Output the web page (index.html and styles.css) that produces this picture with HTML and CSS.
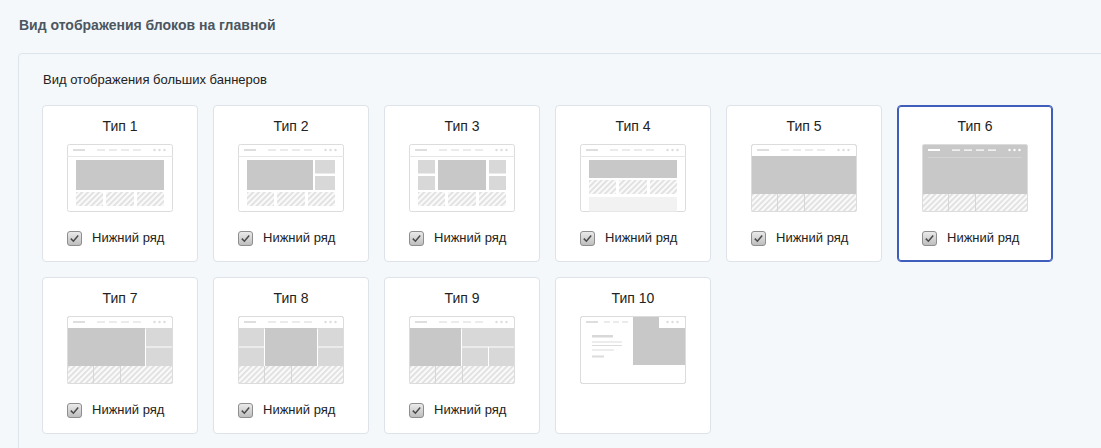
FILE: index.html
```html
<!DOCTYPE html>
<html lang="ru">
<head>
    <meta charset="UTF-8">
    <meta name="viewport" content="width=device-width, initial-scale=1.0">
    <title>Вид отображения блоков</title>
    <link rel="stylesheet" href="styles.css">
</head>
<body>
    <!-- общие элементы для схем -->
    <svg class="defs" width="0" height="0">
        <defs>
            <pattern id="hatch" patternUnits="userSpaceOnUse" width="4" height="4" patternTransform="rotate(45)">
                <rect width="4" height="4" fill="#fafafa"/>
                <rect width="1.7" height="4" fill="#dedede"/>
            </pattern>
            <g id="hdr">
                <rect x="6" y="5" width="12" height="2" fill="#dedede"/>
                <rect x="30" y="5.5" width="8" height="1" fill="#d8d8d8"/>
                <rect x="42" y="5.5" width="8" height="1" fill="#d8d8d8"/>
                <rect x="54" y="5.5" width="8" height="1" fill="#d8d8d8"/>
                <rect x="66" y="5.5" width="8" height="1" fill="#d8d8d8"/>
                <circle cx="87.5" cy="6" r="1.2" fill="#dcdcdc"/>
                <circle cx="92.5" cy="6" r="1.2" fill="#dcdcdc"/>
                <circle cx="97.5" cy="6" r="1.2" fill="#dcdcdc"/>
                <rect x="0" y="12" width="106" height="1" fill="#e6e6e6"/>
            </g>
            <g id="hatch3">
                <rect x="9" y="48" width="27" height="14" fill="url(#hatch)"/>
                <rect x="39" y="48" width="28" height="14" fill="url(#hatch)"/>
                <rect x="70" y="48" width="27" height="14" fill="url(#hatch)"/>
            </g>
            <g id="hatchFull">
                <rect x="0" y="50" width="106" height="18" fill="url(#hatch)"/>
                <rect x="26" y="50" width="1" height="18" fill="#d6d6d6"/>
                <rect x="53" y="50" width="1" height="18" fill="#d6d6d6"/>
            </g>
            <symbol id="check" viewBox="0 0 15 15">
                <linearGradient id="boxFill" x1="0" y1="0" x2="0" y2="1">
                    <stop offset="0" stop-color="#ececec"/>
                    <stop offset="1" stop-color="#bcbcbc"/>
                </linearGradient>
                <rect x="0.5" y="0.5" width="14" height="14" rx="2.5" fill="url(#boxFill)" stroke="#8e8e8e"/>
                <path d="M3.8 7.6 L6.4 10.2 L11.2 4.6" fill="none" stroke="#4a4a4a" stroke-width="1.5"/>
            </symbol>
        </defs>
    </svg>

    <h2 class="section-title">Вид отображения блоков на главной</h2>

    <div class="panel">
        <div class="panel-label">Вид отображения больших баннеров</div>

        <div class="types">
            <div class="type-card">
                <div class="type-name">Тип 1</div>
                <svg class="thumb" viewBox="0 0 106 68">
                    <rect x="0.5" y="0.5" width="105" height="67" rx="2" fill="#fff" stroke="#dcdcdc"/>
                    <use href="#hdr"/>
                    <rect x="9" y="16" width="88" height="30" fill="#c8c8c8"/>
                    <use href="#hatch3"/>
                </svg>
                <label class="bottom-row"><svg class="check"><use href="#check"/></svg>Нижний ряд</label>
            </div>

            <div class="type-card">
                <div class="type-name">Тип 2</div>
                <svg class="thumb" viewBox="0 0 106 68">
                    <rect x="0.5" y="0.5" width="105" height="67" rx="2" fill="#fff" stroke="#dcdcdc"/>
                    <use href="#hdr"/>
                    <rect x="9" y="16" width="66" height="30" fill="#c8c8c8"/>
                    <rect x="77" y="16" width="20" height="13.5" fill="#d8d8d8"/>
                    <rect x="77" y="32" width="20" height="14" fill="#d8d8d8"/>
                    <use href="#hatch3"/>
                </svg>
                <label class="bottom-row"><svg class="check"><use href="#check"/></svg>Нижний ряд</label>
            </div>

            <div class="type-card">
                <div class="type-name">Тип 3</div>
                <svg class="thumb" viewBox="0 0 106 68">
                    <rect x="0.5" y="0.5" width="105" height="67" rx="2" fill="#fff" stroke="#dcdcdc"/>
                    <use href="#hdr"/>
                    <rect x="9" y="16" width="17" height="13.5" fill="#d8d8d8"/>
                    <rect x="9" y="32" width="17" height="14" fill="#d8d8d8"/>
                    <rect x="29" y="16" width="48" height="30" fill="#c8c8c8"/>
                    <rect x="80" y="16" width="17" height="13.5" fill="#d8d8d8"/>
                    <rect x="80" y="32" width="17" height="14" fill="#d8d8d8"/>
                    <use href="#hatch3"/>
                </svg>
                <label class="bottom-row"><svg class="check"><use href="#check"/></svg>Нижний ряд</label>
            </div>

            <div class="type-card">
                <div class="type-name">Тип 4</div>
                <svg class="thumb" viewBox="0 0 106 68">
                    <rect x="0.5" y="0.5" width="105" height="67" rx="2" fill="#fff" stroke="#dcdcdc"/>
                    <use href="#hdr"/>
                    <rect x="9" y="16" width="88" height="18" fill="#c8c8c8"/>
                    <rect x="9" y="36" width="27" height="14" fill="url(#hatch)"/>
                    <rect x="39" y="36" width="28" height="14" fill="url(#hatch)"/>
                    <rect x="70" y="36" width="27" height="14" fill="url(#hatch)"/>
                    <rect x="9" y="53" width="88" height="14.5" fill="#f2f2f2"/>
                </svg>
                <label class="bottom-row"><svg class="check"><use href="#check"/></svg>Нижний ряд</label>
            </div>

            <div class="type-card">
                <div class="type-name">Тип 5</div>
                <svg class="thumb" viewBox="0 0 106 68">
                    <rect x="0.5" y="0.5" width="105" height="67" rx="2" fill="#fff" stroke="#dcdcdc"/>
                    <use href="#hdr"/>
                    <rect x="0" y="12" width="106" height="38" fill="#c8c8c8"/>
                    <use href="#hatchFull"/>
                    <rect x="0.5" y="0.5" width="105" height="67" rx="2" fill="none" stroke="#dcdcdc"/>
                </svg>
                <label class="bottom-row"><svg class="check"><use href="#check"/></svg>Нижний ряд</label>
            </div>

            <div class="type-card active">
                <div class="type-name">Тип 6</div>
                <svg class="thumb" viewBox="0 0 106 68">
                    <rect x="0.5" y="0.5" width="105" height="67" rx="2" fill="#c8c8c8" stroke="#d4d4d4"/>
                    <rect x="6" y="5" width="12" height="2" fill="#fff"/>
                    <rect x="30" y="5.5" width="8" height="1.2" fill="#fff"/>
                    <rect x="42" y="5.5" width="8" height="1.2" fill="#fff"/>
                    <rect x="54" y="5.5" width="8" height="1.2" fill="#fff"/>
                    <rect x="66" y="5.5" width="8" height="1.2" fill="#fff"/>
                    <circle cx="87.5" cy="6" r="1.2" fill="#fff"/>
                    <circle cx="92.5" cy="6" r="1.2" fill="#fff"/>
                    <circle cx="97.5" cy="6" r="1.2" fill="#fff"/>
                    <rect x="6" y="13" width="94" height="0.7" fill="#dadada"/>
                    <use href="#hatchFull"/>
                    <rect x="0.5" y="0.5" width="105" height="67" rx="2" fill="none" stroke="#dcdcdc"/>
                </svg>
                <label class="bottom-row"><svg class="check"><use href="#check"/></svg>Нижний ряд</label>
            </div>

            <div class="type-card">
                <div class="type-name">Тип 7</div>
                <svg class="thumb" viewBox="0 0 106 68">
                    <rect x="0.5" y="0.5" width="105" height="67" rx="2" fill="#fff" stroke="#dcdcdc"/>
                    <use href="#hdr"/>
                    <rect x="0" y="12" width="78" height="38" fill="#c8c8c8"/>
                    <rect x="79" y="12" width="27" height="18.5" fill="#d8d8d8"/>
                    <rect x="79" y="31.5" width="27" height="18.5" fill="#d8d8d8"/>
                    <use href="#hatchFull"/>
                    <rect x="0.5" y="0.5" width="105" height="67" rx="2" fill="none" stroke="#dcdcdc"/>
                </svg>
                <label class="bottom-row"><svg class="check"><use href="#check"/></svg>Нижний ряд</label>
            </div>

            <div class="type-card">
                <div class="type-name">Тип 8</div>
                <svg class="thumb" viewBox="0 0 106 68">
                    <rect x="0.5" y="0.5" width="105" height="67" rx="2" fill="#fff" stroke="#dcdcdc"/>
                    <use href="#hdr"/>
                    <rect x="0" y="12" width="26" height="18.5" fill="#d8d8d8"/>
                    <rect x="0" y="31.5" width="26" height="18.5" fill="#d8d8d8"/>
                    <rect x="27" y="12" width="52" height="38" fill="#c8c8c8"/>
                    <rect x="80" y="12" width="26" height="18.5" fill="#d8d8d8"/>
                    <rect x="80" y="31.5" width="26" height="18.5" fill="#d8d8d8"/>
                    <use href="#hatchFull"/>
                    <rect x="0.5" y="0.5" width="105" height="67" rx="2" fill="none" stroke="#dcdcdc"/>
                </svg>
                <label class="bottom-row"><svg class="check"><use href="#check"/></svg>Нижний ряд</label>
            </div>

            <div class="type-card">
                <div class="type-name">Тип 9</div>
                <svg class="thumb" viewBox="0 0 106 68">
                    <rect x="0.5" y="0.5" width="105" height="67" rx="2" fill="#fff" stroke="#dcdcdc"/>
                    <use href="#hdr"/>
                    <rect x="0" y="12" width="52" height="38" fill="#c8c8c8"/>
                    <rect x="53" y="12" width="53" height="18.5" fill="#d8d8d8"/>
                    <rect x="53" y="31.5" width="26" height="18.5" fill="#d8d8d8"/>
                    <rect x="80" y="31.5" width="26" height="18.5" fill="#d8d8d8"/>
                    <use href="#hatchFull"/>
                    <rect x="0.5" y="0.5" width="105" height="67" rx="2" fill="none" stroke="#dcdcdc"/>
                </svg>
                <label class="bottom-row"><svg class="check"><use href="#check"/></svg>Нижний ряд</label>
            </div>

            <div class="type-card">
                <div class="type-name">Тип 10</div>
                <svg class="thumb" viewBox="0 0 106 68">
                    <rect x="0.5" y="0.5" width="105" height="67" rx="2" fill="#fff" stroke="#dcdcdc"/>
                    <rect x="6" y="5" width="12" height="2" fill="#dedede"/>
                    <rect x="24" y="5.5" width="6" height="1" fill="#d8d8d8"/>
                    <rect x="33" y="5.5" width="6" height="1" fill="#d8d8d8"/>
                    <rect x="42" y="5.5" width="6" height="1" fill="#d8d8d8"/>
                    <rect x="53" y="0" width="53" height="49" fill="#c8c8c8"/>
                    <rect x="79" y="0.5" width="26.5" height="11.5" fill="#fff"/>
                    <circle cx="87.5" cy="6" r="1.2" fill="#dcdcdc"/>
                    <circle cx="92.5" cy="6" r="1.2" fill="#dcdcdc"/>
                    <circle cx="97.5" cy="6" r="1.2" fill="#dcdcdc"/>
                    <rect x="12" y="19" width="21" height="2.5" fill="#d8d8d8"/>
                    <rect x="12" y="25.5" width="30" height="1" fill="#dcdcdc"/>
                    <rect x="12" y="29" width="30" height="1" fill="#dcdcdc"/>
                    <rect x="12" y="33.5" width="22" height="1" fill="#dcdcdc"/>
                    <rect x="12" y="39.5" width="12" height="2" fill="#dcdcdc"/>
                    <rect x="0.5" y="0.5" width="105" height="67" rx="2" fill="none" stroke="#dcdcdc"/>
                </svg>
            </div>
        </div>
    </div>
</body>
</html>
```

FILE: styles.css
```css
body {
    margin: 0;
    padding: 17px 0 0 18px;
    background-color: #f5f8fa;
    font-family: "Liberation Sans", Arial, sans-serif;
    color: #222;
    overflow: hidden;
}
.defs {
    position: absolute;
    width: 0;
    height: 0;
}
.section-title {
    margin: 0 0 20px 1px;
    font-size: 14px;
    line-height: 16px;
    font-weight: bold;
    color: #4b5661;
}
.panel {
    margin-right: -30px;
    padding: 18px 23px 40px;
    border: 1px solid #dde5ec;
    border-radius: 4px;
    background-color: #f5f8fa;
}
.panel-label {
    margin-left: 1px;
    font-size: 13px;
    line-height: 15px;
    color: #222;
}
.types {
    display: grid;
    grid-template-columns: repeat(6, 156px);
    gap: 15px;
    margin-top: 18px;
}
.type-card {
    box-sizing: border-box;
    height: 157px;
    padding-top: 12px;
    display: flex;
    flex-direction: column;
    align-items: center;
    background-color: #fff;
    border: 1px solid #dde3e8;
    border-radius: 4px;
}
.type-card.active {
    border-color: #3f5dba;
    box-shadow: inset 0 0 0 1px #3f5dba;
}
.type-name {
    font-size: 14px;
    line-height: 16px;
    color: #222;
}
.thumb {
    display: block;
    width: 106px;
    height: 68px;
    margin-top: 10px;
}
.bottom-row {
    display: flex;
    align-items: center;
    width: 106px;
    margin-top: 18px;
    font-size: 13px;
    line-height: 16px;
    color: #222;
    cursor: pointer;
}
.check {
    width: 15px;
    height: 15px;
    margin-right: 10px;
    flex-shrink: 0;
}
```
